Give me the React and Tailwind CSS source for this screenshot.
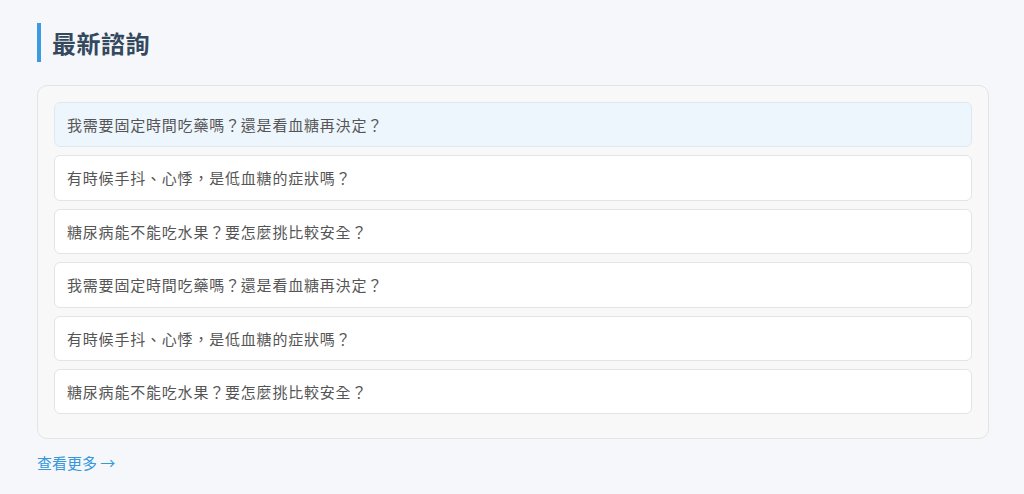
const questions = [
  "我需要固定時間吃藥嗎？還是看血糖再決定？",
  "有時候手抖、心悸，是低血糖的症狀嗎？",
  "糖尿病能不能吃水果？要怎麼挑比較安全？",
  "我需要固定時間吃藥嗎？還是看血糖再決定？",
  "有時候手抖、心悸，是低血糖的症狀嗎？",
  "糖尿病能不能吃水果？要怎麼挑比較安全？",
];

export default function App() {
  return (
    <div
      className="min-h-[494px] bg-[#f5f7fb] pt-[23px] pl-[37px] pr-[35px] pb-6"
      style={{ fontFamily: '"Noto Sans CJK TC", "Noto Sans", sans-serif' }}
    >
      <h2 className="border-l-4 border-[#3b9ae1] pl-[11px] text-[24px] font-bold leading-[39px] text-[#34495e] tracking-[0.5px]">
        最新諮詢
      </h2>

      <div className="mt-[23px] rounded-[10px] border border-[#e4e4e4] bg-[#f8f8f8] p-4">
        {questions.map((q, i) => (
          <div
            key={i}
            className={
              i === 0
                ? "mb-2 rounded-md border border-[#dfe8f1] bg-[#eef6fd] px-3 py-[11px] text-[15px] leading-[21.4px] tracking-[0.8px] text-[#555] cursor-pointer"
                : "mb-2 rounded-md border border-[#e4e4e4] bg-white px-3 py-[11px] text-[15px] leading-[21.4px] tracking-[0.8px] text-[#555] cursor-pointer"
            }
          >
            {q}
          </div>
        ))}
      </div>

      <a
        href="#"
        className="mt-[13px] inline-block text-[15px] leading-[21px] text-[#3498db]"
      >
        查看更多 →
      </a>
    </div>
  );
}
